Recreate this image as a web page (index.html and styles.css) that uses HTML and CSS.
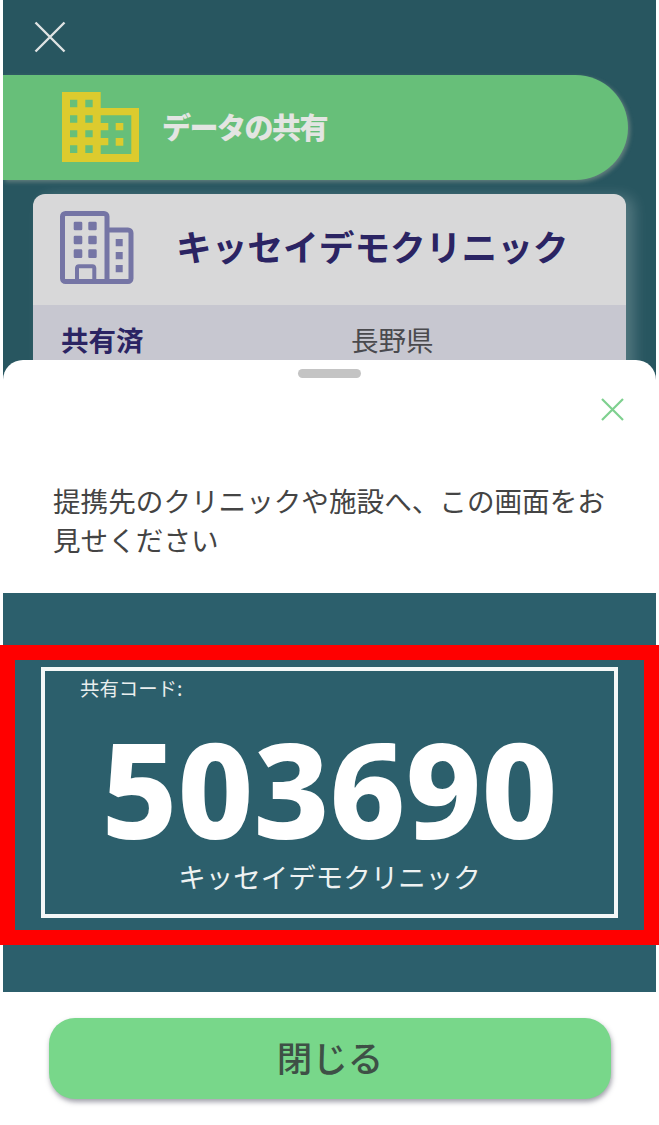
FILE: index.html
```html
<!DOCTYPE html>
<html lang="ja">
<head>
<meta charset="utf-8">
<title>データの共有</title>
<link rel="stylesheet" href="styles.css">
</head>
<body>
<main class="app">
  <div class="upper">
    <section class="backdrop">
      <button class="close-top" aria-label="閉じる">
        <svg width="32" height="32" viewBox="0 0 32 32"><path d="M1.500 1.500 30.500 30.500M30.500 1.500 1.500 30.500" fill="none" stroke="#dfe3e3" stroke-width="2.400"/></svg>
      </button>
      <div class="banner">
        <svg class="banner-icon" width="77" height="70" viewBox="0 0 77 70">
          <path fill="#dccb2e" d="M0 0H38.700V16H77V70H0Z"/>
          <path fill="#67bf79" d="M38.700 23.300H69.300V62H38.700V53.300H46.300V46H38.700V38.300H46.300V31H38.700Z"/>
          <path fill="#67bf79" d="M8 7.700H15.300V15.300H8ZM23.300 7.700H30.700V15.300H23.300ZM8 23.300H15.300V30.700H8ZM23.300 23.300H30.700V30.700H23.300ZM8 38.300H15.300V45.300H8ZM23.300 38.300H30.700V45.300H23.300ZM8 53.300H15.300V61H8ZM23.300 53.300H30.700V61H23.300Z"/>
          <path fill="#dccb2e" d="M53.700 31H61.300V38.300H53.700ZM53.700 46H61.300V53.700H53.700Z"/>
        </svg>
        <h1 class="banner-title">データの共有</h1>
      </div>
      <article class="card">
        <header class="card-head">
          <svg class="card-icon" width="74" height="73" viewBox="0 0 74 73">
            <path fill="none" stroke="#7575a5" stroke-width="5" stroke-linejoin="round" d="M2.500 67.500V5.500A3 3 0 0 1 5.500 2.500H44A3 3 0 0 1 47 5.500V70.500H5.500A3 3 0 0 1 2.500 67.500ZM47 19H68A3 3 0 0 1 71 22V67.500A3 3 0 0 1 68 70.500H47"/>
            <path fill="#7575a5" d="M15 10.700H21A1.300 1.300 0 0 1 22.300 12V18A1.300 1.300 0 0 1 21 19.300H15A1.300 1.300 0 0 1 13.700 18V12A1.300 1.300 0 0 1 15 10.700ZM29.600 10.700H35.400A1.300 1.300 0 0 1 36.700 12V18A1.300 1.300 0 0 1 35.400 19.300H29.600A1.300 1.300 0 0 1 28.300 18V12A1.300 1.300 0 0 1 29.600 10.700ZM15 24.700H21A1.300 1.300 0 0 1 22.300 26V32A1.300 1.300 0 0 1 21 33.300H15A1.300 1.300 0 0 1 13.700 32V26A1.300 1.300 0 0 1 15 24.700ZM29.600 24.700H35.400A1.300 1.300 0 0 1 36.700 26V32A1.300 1.300 0 0 1 35.400 33.300H29.600A1.300 1.300 0 0 1 28.300 32V26A1.300 1.300 0 0 1 29.600 24.700ZM15 38.300H21A1.300 1.300 0 0 1 22.300 39.600V45.700A1.300 1.300 0 0 1 21 47H15A1.300 1.300 0 0 1 13.700 45.700V39.600A1.300 1.300 0 0 1 15 38.300ZM29.600 38.300H35.400A1.300 1.300 0 0 1 36.700 39.600V45.700A1.300 1.300 0 0 1 35.400 47H29.600A1.300 1.300 0 0 1 28.300 45.700V39.600A1.300 1.300 0 0 1 29.600 38.300ZM55.700 28H62.700V35.300H55.700ZM55.700 41H62.700V48.300H55.700ZM55.700 54H62.700V61.300H55.700Z"/>
            <path fill="none" stroke="#7575a5" stroke-width="4" stroke-linejoin="round" d="M17 70V57A2 2 0 0 1 19 55.300H32.300A2 2 0 0 1 34.300 57V70"/>
          </svg>
          <h2 class="card-title">キッセイデモクリニック</h2>
        </header>
        <div class="card-row">
          <span class="row-label">共有済</span>
          <span class="row-value">長野県</span>
        </div>
      </article>
    </section>
    <section class="sheet">
      <div class="handle"></div>
      <div class="sheet-close">
        <svg width="23" height="23" viewBox="0 0 23 23"><path d="M1 1 22 22M22 1 1 22" fill="none" stroke="#7ed08f" stroke-width="2.200"/></svg>
      </div>
      <p class="sheet-text">提携先のクリニックや施設へ、この画面をお見せください</p>
    </section>
  </div>
  <section class="code-panel">
    <div class="code-box">
      <div class="code-label">共有コード:</div>
      <div class="code-number">503690</div>
      <div class="code-name">キッセイデモクリニック</div>
    </div>
    <div class="highlight"></div>
  </section>
  <div class="footer">
    <button class="close-btn">閉じる</button>
  </div>
</main>
</body>
</html>
```
FILE: styles.css
```css
* { box-sizing: border-box; }
html, body { margin: 0; padding: 0; background: #fff; }
body {
  width: 659px;
  height: 1125px;
  overflow: hidden;
  font-family: "Noto Sans CJK JP", "Noto Sans", sans-serif;
}
h1, h2, p { margin: 0; }
button { font-family: inherit; border: 0; padding: 0; background: none; }

.app { margin: 0 3px; width: 653px; }
.upper { background: #285660; }

.backdrop { height: 360px; overflow: hidden; padding-top: 21px; }
.close-top { display: block; width: 32px; height: 32px; margin-left: 31px; }
.close-top svg { display: block; }

.banner {
  margin-top: 22px;
  width: 625px;
  height: 105px;
  background: #67bf79;
  border-radius: 0 53px 53px 0;
  box-shadow: 2px 2px 4px rgba(190, 190, 170, .4);
  display: flex;
  align-items: flex-start;
  padding: 17px 0 0 59px;
}
.banner-icon { flex: none; }
.banner-title {
  margin: 12px 0 0 23px;
  font-size: 29px;
  line-height: 44px;
  font-weight: 900;
  letter-spacing: -1.500px;
  color: #e3e5e2;
}

.card {
  margin: 14px 0 0 30px;
  width: 593px;
  height: 200px;
  border-radius: 12px;
  overflow: hidden;
  background: #d8d8d9;
  box-shadow: 8px 2px 14px rgba(255, 255, 255, .2);
}
.card-head {
  height: 111px;
  display: flex;
  align-items: flex-start;
  padding: 17px 0 0 27px;
}
.card-icon { flex: none; }
.card-title {
  margin: 9px 0 0 42px;
  font-size: 35.700px;
  line-height: 52px;
  font-weight: 700;
  white-space: nowrap;
  color: #2b2463;
}
.card-row {
  height: 89px;
  background: #c7c7d0;
  display: flex;
  padding: 14px 0 0 28px;
  font-size: 27.500px;
  line-height: 40px;
}
.row-label { width: 290px; font-weight: 700; color: #2b2463; }
.row-value { color: #4a4a4e; }

.sheet {
  height: 233px;
  background: #fff;
  border-radius: 20px 20px 0 0;
  padding-top: 9px;
  position: relative;
}
.handle {
  width: 63px;
  height: 9px;
  margin: 0 auto;
  border-radius: 5px;
  background: #c4c4c4;
}
.sheet-close { height: 23px; margin: 20px 0 0 598px; }
.sheet-close svg { display: block; }
.sheet-text {
  margin: 60px 47px 0 50px;
  font-size: 27.600px;
  line-height: 39px;
  color: #444;
}

.code-panel {
  position: relative;
  height: 399px;
  background: #2c5f6c;
  padding: 74px 38px 0;
}
.code-box {
  height: 251px;
  border: 4px solid #f4f7f7;
  color: #fff;
  text-align: center;
}
.code-label {
  text-align: left;
  padding-left: 35px;
  margin-top: 3px;
  font-size: 19.400px;
  line-height: 27px;
  color: #e9eeee;
}
.code-number {
  font-family: "Noto Sans", sans-serif;
  font-weight: 800;
  font-size: 131.500px;
  line-height: 120px;
  margin-top: 27px;
}
.code-name {
  font-size: 27.500px;
  line-height: 40px;
  color: #eef2f2;
  margin-top: 8px;
}
.highlight {
  position: absolute;
  left: -3px;
  top: 52px;
  width: 659px;
  height: 300px;
  border: 15px solid #f00;
}

.footer { padding: 26px 0 0 46px; }
.close-btn {
  display: block;
  width: 562px;
  height: 81px;
  padding-bottom: 4px;
  border-radius: 26px;
  background: #78d78a;
  box-shadow: 1px 3px 5px rgba(70, 70, 90, .5);
  font-size: 35.500px;
  font-weight: 500;
  color: #3e5046;
}
```
